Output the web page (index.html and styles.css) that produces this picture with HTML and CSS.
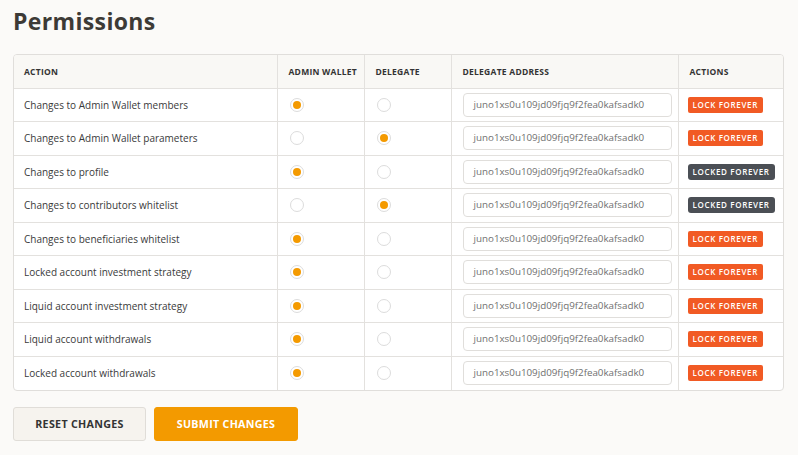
FILE: index.html
```html
<!DOCTYPE html>
<html>
<head>
<meta charset="utf-8">
<link rel="stylesheet" href="styles.css">
</head>
<body>
<div class="page">
  <h1 class="title">Permissions</h1>
  <div class="table-wrap">
    <table class="perm">
      <colgroup>
        <col class="c-action"><col class="c-admin"><col class="c-del"><col class="c-addr"><col class="c-act">
      </colgroup>
      <thead>
        <tr><th>Action</th><th>Admin Wallet</th><th>Delegate</th><th>Delegate Address</th><th>Actions</th></tr>
      </thead>
      <tbody>
        <tr><td>Changes to Admin Wallet members</td><td><span class="radio on"></span></td><td><span class="radio"></span></td><td><div class="addr">juno1xs0u109jd09fjq9f2fea0kafsadk0</div></td><td><span class="btn-lock">Lock forever</span></td></tr>
        <tr><td>Changes to Admin Wallet parameters</td><td><span class="radio"></span></td><td><span class="radio on"></span></td><td><div class="addr">juno1xs0u109jd09fjq9f2fea0kafsadk0</div></td><td><span class="btn-lock">Lock forever</span></td></tr>
        <tr><td>Changes to profile</td><td><span class="radio on"></span></td><td><span class="radio"></span></td><td><div class="addr">juno1xs0u109jd09fjq9f2fea0kafsadk0</div></td><td><span class="btn-locked">Locked forever</span></td></tr>
        <tr><td>Changes to contributors whitelist</td><td><span class="radio"></span></td><td><span class="radio on"></span></td><td><div class="addr">juno1xs0u109jd09fjq9f2fea0kafsadk0</div></td><td><span class="btn-locked">Locked forever</span></td></tr>
        <tr><td>Changes to beneficiaries whitelist</td><td><span class="radio on"></span></td><td><span class="radio"></span></td><td><div class="addr">juno1xs0u109jd09fjq9f2fea0kafsadk0</div></td><td><span class="btn-lock">Lock forever</span></td></tr>
        <tr><td>Locked account investment strategy</td><td><span class="radio on"></span></td><td><span class="radio"></span></td><td><div class="addr">juno1xs0u109jd09fjq9f2fea0kafsadk0</div></td><td><span class="btn-lock">Lock forever</span></td></tr>
        <tr><td>Liquid account investment strategy</td><td><span class="radio on"></span></td><td><span class="radio"></span></td><td><div class="addr">juno1xs0u109jd09fjq9f2fea0kafsadk0</div></td><td><span class="btn-lock">Lock forever</span></td></tr>
        <tr><td>Liquid account withdrawals</td><td><span class="radio on"></span></td><td><span class="radio"></span></td><td><div class="addr">juno1xs0u109jd09fjq9f2fea0kafsadk0</div></td><td><span class="btn-lock">Lock forever</span></td></tr>
        <tr><td>Locked account withdrawals</td><td><span class="radio on"></span></td><td><span class="radio"></span></td><td><div class="addr">juno1xs0u109jd09fjq9f2fea0kafsadk0</div></td><td><span class="btn-lock">Lock forever</span></td></tr>
      </tbody>
    </table>
  </div>
  <div class="actions">
    <button class="btn reset">Reset changes</button>
    <button class="btn submit">Submit changes</button>
  </div>
</div>
</body>
</html>
```
FILE: styles.css
```css
* { box-sizing: border-box; }
html, body { margin: 0; padding: 0; }
body {
  background: #fbfaf8;
  font-family: "Open Sans", "Liberation Sans", sans-serif;
  color: #333;
}
.page { padding: 6px 14px 0 13px; }
.title {
  margin: 0;
  font-size: 23px;
  font-weight: 700;
  color: #3d3a36;
  line-height: 30px;
  letter-spacing: 0.35px;
}
.table-wrap {
  margin-top: 18px;
  border: 1px solid #e0dedb;
  border-radius: 4px;
  overflow: hidden;
  background: #fff;
}
.perm {
  width: 100%;
  border-collapse: collapse;
  table-layout: fixed;
}
.c-action { width: 263px; }
.c-admin { width: 87px; }
.c-del { width: 87px; }
.c-addr { width: 227px; }
.c-act { width: auto; }
.perm th {
  background: #f9f8f5;
  height: 33px;
  text-align: left;
  font-size: 8.5px;
  font-weight: 700;
  text-transform: uppercase;
  letter-spacing: 0.25px;
  color: #333;
  padding: 0 11px;
  white-space: nowrap;
  border-left: 1px solid #e3e1de;
  border-bottom: 1px solid #e3e1de;
}
.perm td {
  height: 33.5px;
  font-size: 10px;
  color: #3a3a3a;
  padding: 0 11px;
  border-left: 1px solid #e3e1de;
  border-top: 1px solid #e3e1de;
  vertical-align: middle;
}
.perm th:first-child, .perm td:first-child { border-left: none; padding-left: 10px; }
.perm tbody tr:first-child td { border-top: none; }
.radio {
  display: block;
  width: 14px;
  height: 14px;
  border-radius: 50%;
  border: 1px solid #dcdcdc;
  background: #fff;
  margin-left: 1px;
  position: relative;
}
.radio.on::after {
  content: "";
  position: absolute;
  left: 2px;
  top: 2px;
  width: 8px;
  height: 8px;
  border-radius: 50%;
  background: #f49a00;
}
.addr {
  width: 209px;
  height: 24px;
  border: 1px solid #e0dedb;
  border-radius: 4px;
  padding: 0 10px;
  font-size: 9.8px;
  line-height: 22px;
  color: #6f6f6f;
  white-space: nowrap;
  overflow: hidden;
}
.perm td:nth-child(5) { padding-left: 9px; }
.btn-lock, .btn-locked {
  display: inline-block;
  height: 16px;
  line-height: 16px;
  padding: 0 5px;
  border-radius: 2px;
  font-size: 8px;
  font-weight: 600;
  text-transform: uppercase;
  letter-spacing: 0.65px;
  color: #fff;
  white-space: nowrap;
}
.btn-lock { background: #f15a24; }
.btn-locked { background: #4b4f55; border-radius: 3px; }
.actions {
  display: flex;
  gap: 8px;
  margin-top: 16px;
}
.btn {
  height: 34px;
  border-radius: 3px;
  font-family: "Open Sans", "Liberation Sans", sans-serif;
  font-size: 10.7px;
  font-weight: 700;
  text-transform: uppercase;
  letter-spacing: 0.3px;
  cursor: pointer;
}
.reset {
  width: 133px;
  background: #f6f3ee;
  border: 1px solid #e0ddd8;
  color: #333;
}
.submit {
  width: 144px;
  background: #f39a00;
  border: 1px solid #f39a00;
  color: #fff;
}
```
